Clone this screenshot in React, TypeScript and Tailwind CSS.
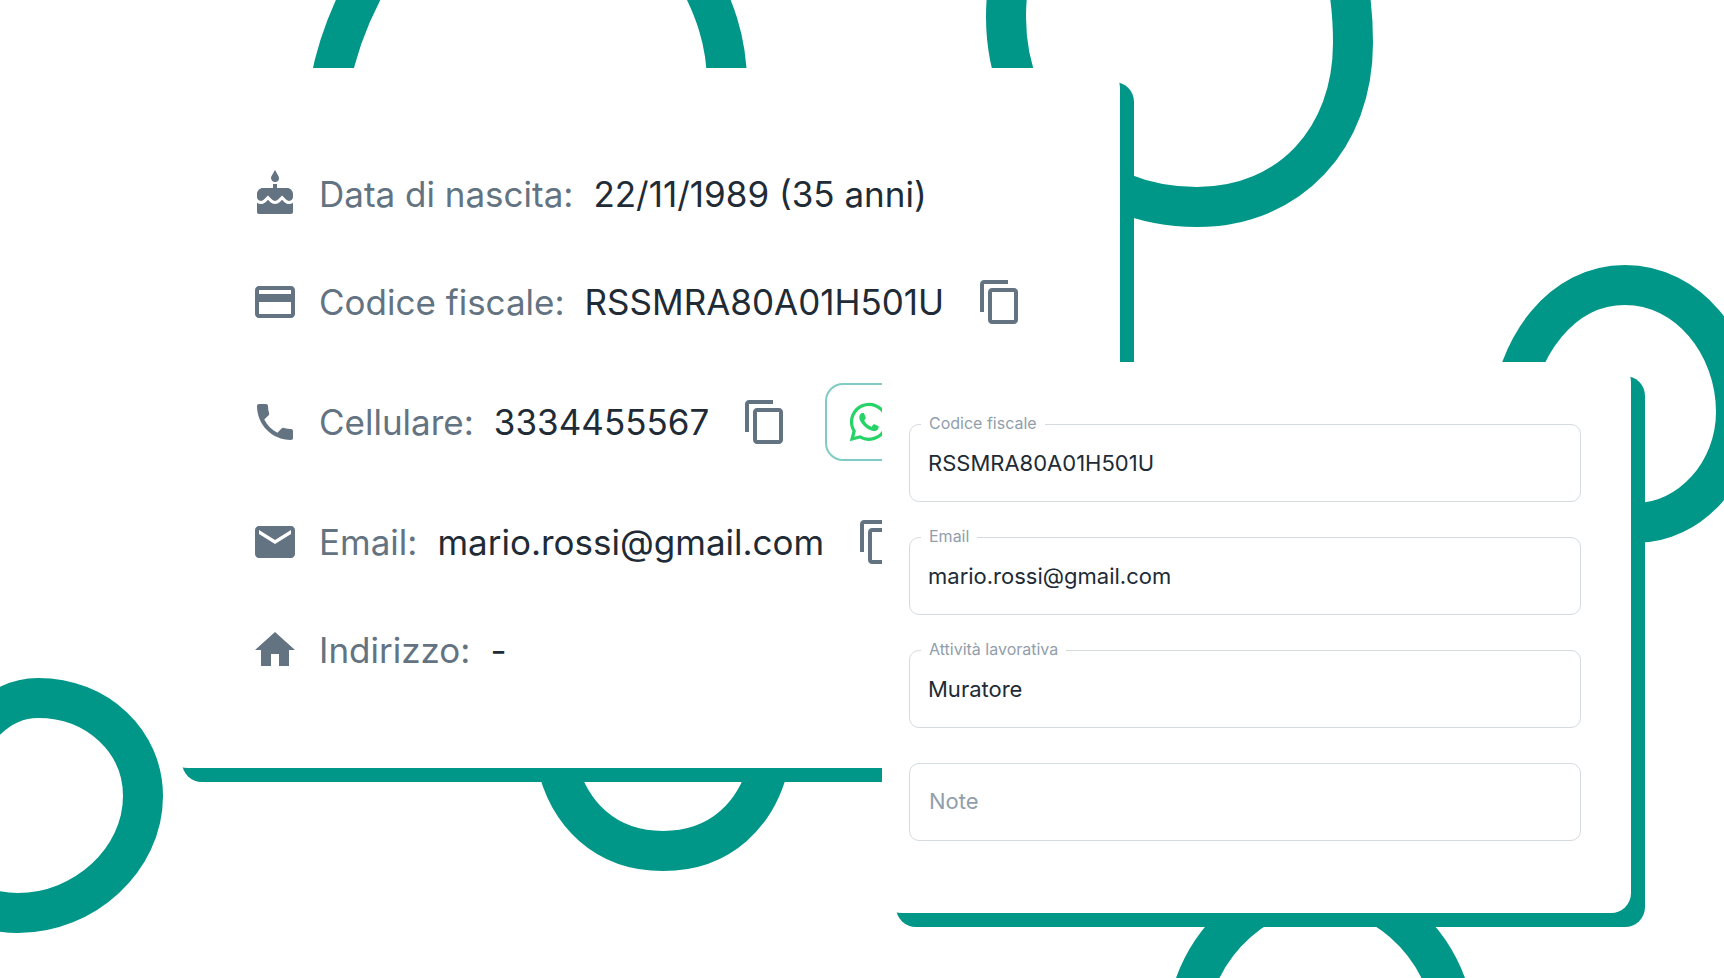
import type { ReactNode } from "react";
import type { IconType } from "react-icons";
import { FaWhatsapp } from "react-icons/fa";
import { MdCake, MdContentCopy, MdCreditCard, MdEmail, MdHome, MdPhone } from "react-icons/md";

type Detail = {
  icon: IconType;
  label: string;
  value: string;
  copy?: boolean;
  extra?: ReactNode;
};

const details: Detail[] = [
  { icon: MdCake, label: "Data di nascita:", value: "22/11/1989 (35 anni)" },
  { icon: MdCreditCard, label: "Codice fiscale:", value: "RSSMRA80A01H501U", copy: true },
  { icon: MdPhone, label: "Cellulare:", value: "3334455567", copy: true, extra: <WhatsappButton /> },
  { icon: MdEmail, label: "Email:", value: "mario.rossi@gmail.com", copy: true },
  { icon: MdHome, label: "Indirizzo:", value: "-" },
];

const fields = [
  { id: "codice-fiscale", label: "Codice fiscale", value: "RSSMRA80A01H501U" },
  { id: "email", label: "Email", value: "mario.rossi@gmail.com" },
  { id: "attivita", label: "Attività lavorativa", value: "Muratore" },
  { id: "note", label: "Note", value: "" },
];

function WhatsappButton() {
  return (
    <button
      type="button"
      aria-label="WhatsApp"
      className="my-px ml-8 flex h-[78px] shrink-0 items-center rounded-[18px] border-2 border-[#80cbc4] px-5"
    >
      <FaWhatsapp className="size-11 text-[#25d366]" />
    </button>
  );
}

function Rings() {
  return (
    <svg
      className="absolute inset-0 h-full w-full"
      viewBox="0 0 1724 978"
      preserveAspectRatio="xMidYMid slice"
      fill="none"
      stroke="#009688"
      strokeWidth="40"
      aria-hidden="true"
    >
      <path d="M374 -30 C354 4 338 40 330 84 M694 -30 C714 6 727 40 727 84" />
      <path d="M1012 -30 C1007 -14 1006 0 1006 17 C1006 125 1088 207 1197 207 C1290 207 1353 138 1353 43 C1353 12 1350 -10 1345 -30" />
      <path d="M1510 420 C1516 345 1562 285 1625 285 C1688 285 1736 345 1736 412 C1736 472 1690 523 1636 523" />
      <path d="M-24 732 C-8 711 14 698 38 698 C98 698 143 742 143 796 C143 860 84 913 18 913 C0 913 -16 909 -30 902" />
      <path d="M556 760 C568 815 606 851 663 851 C720 851 758 815 770 760" />
      <path d="M1190 1000 C1206 940 1256 890 1320 890 C1384 890 1435 940 1451 1000" />
    </svg>
  );
}

function DetailRow({ icon: Icon, label, value, copy, extra }: Detail) {
  return (
    <li className="flex min-h-14 items-center whitespace-nowrap text-[35px] leading-none">
      <Icon className="mr-5 size-12 shrink-0 text-[#637381]" />
      <span className="mr-5 text-[#637381]">{label}</span>
      <span className="text-[#212b36]">{value}</span>
      {copy && (
        <button type="button" aria-label={`Copia ${value}`} className="ml-7 p-1 text-[#637381]">
          <MdContentCopy className="size-12" />
        </button>
      )}
      {extra}
    </li>
  );
}

export default function App() {
  return (
    <main className="relative min-h-screen overflow-hidden bg-white font-['Inter','Liberation_Sans',sans-serif]">
      <Rings />

      <div className="relative grid grid-cols-[168fr_714fr_238fr_511fr_93fr] grid-rows-[294px_406px_auto] pt-[68px]">
        <section className="col-start-2 col-end-4 row-start-1 row-end-3 min-w-0 rounded-[20px] bg-white pt-[98px] pl-[83px] shadow-[14px_14px_0_#009688]">
          <ul className="flex flex-col gap-[52px]">
            {details.map((detail) => (
              <DetailRow key={detail.label} {...detail} />
            ))}
          </ul>
        </section>

        {/* square top left corner, it sits on top of the first card */}
        <form className="col-start-3 col-end-5 row-start-2 row-end-4 flex min-w-0 flex-col gap-[35px] rounded-[20px] rounded-tl-none bg-white pt-[62px] pr-[50px] pb-[72px] pl-[27px] shadow-[14px_14px_0_#009688]">
          {fields.map((field) => (
            <div key={field.id} className="relative">
              <input
                id={field.id}
                type="text"
                defaultValue={field.value}
                className="block h-[78px] w-full rounded-[10px] border border-[#d5dae0] bg-white px-[18px] text-[22px] text-[#212b36]"
              />
              <label
                htmlFor={field.id}
                className={
                  field.value
                    ? "absolute -top-[11px] left-3 bg-white px-2 text-[16px] leading-5 text-[#919eab]"
                    : "absolute top-6 left-3 px-2 text-[22px] leading-7 text-[#919eab]"
                }
              >
                {field.label}
              </label>
            </div>
          ))}
        </form>
      </div>
    </main>
  );
}
